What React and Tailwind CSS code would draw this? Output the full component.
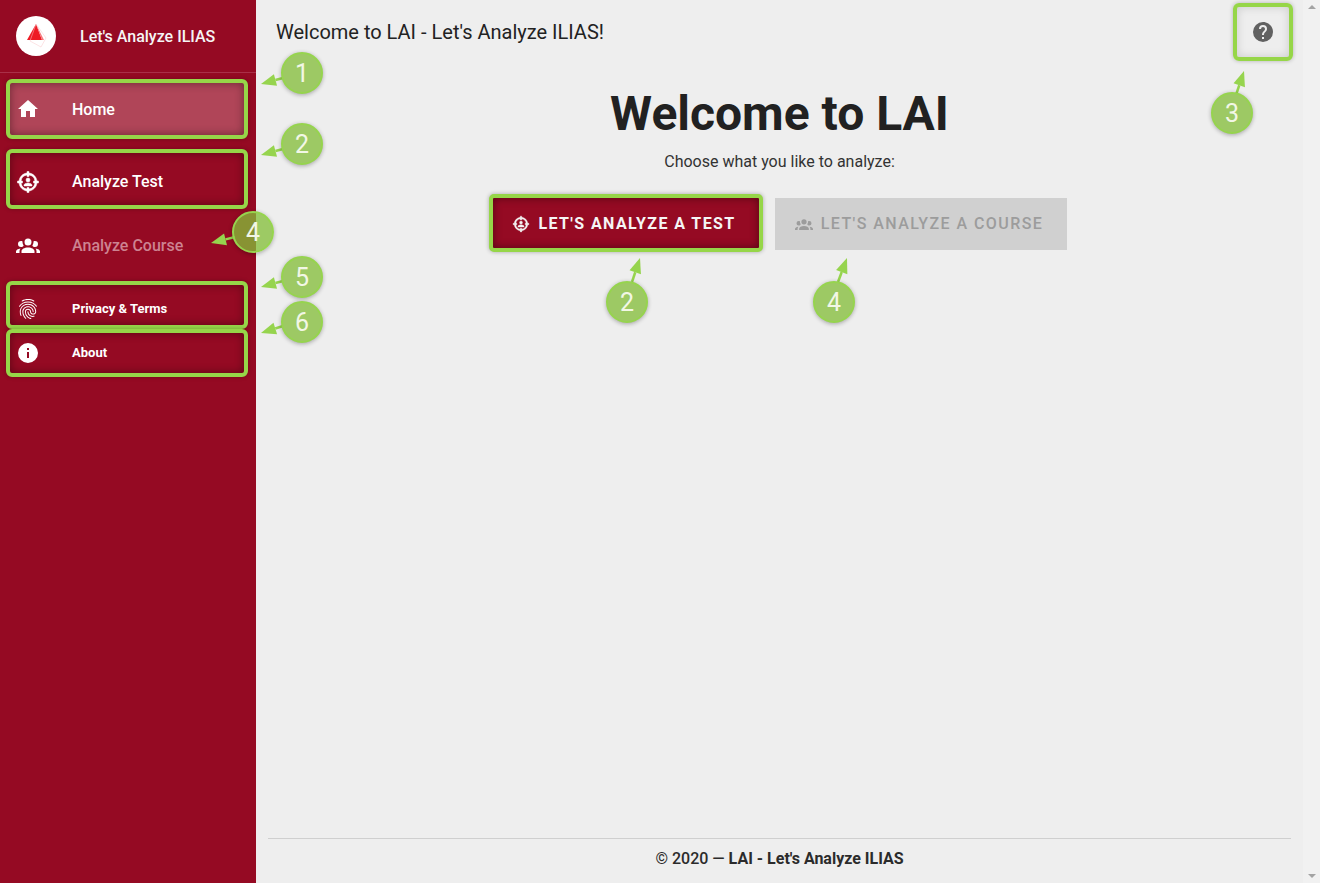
import { MdFingerprint } from "react-icons/md";

const HOME = "M10 20v-6h4v6h5v-8h3L12 3 2 12h3v8z";
const TARGET =
  "M20.95 11h1.55v2h-1.55c-.45 4.17-3.78 7.5-7.95 7.95v1.55h-2v-1.55C6.83 20.5 3.5 17.17 3.05 13H1.5v-2h1.55C3.5 6.83 6.83 3.5 11 3.05V1.5h2v1.55c4.17.45 7.5 3.78 7.95 7.95M5.07 11H6.5v2H5.07A6.98 6.98 0 0 0 11 18.93V17.5h2v1.43A6.98 6.98 0 0 0 18.93 13H17.5v-2h1.43A6.98 6.98 0 0 0 13 5.07V6.5h-2V5.07A6.98 6.98 0 0 0 5.07 11M16 16H8v-1c0-1.33 2.67-2 4-2s4 .67 4 2zm-4-8a2 2 0 0 1 2 2 2 2 0 0 1-2 2 2 2 0 0 1-2-2 2 2 0 0 1 2-2";
const GROUP =
  "M12,5.5A3.5,3.5 0 0,1 15.5,9A3.5,3.5 0 0,1 12,12.5A3.5,3.5 0 0,1 8.5,9A3.5,3.5 0 0,1 12,5.5M5,8C5.56,8 6.08,8.15 6.53,8.42C6.38,9.85 6.8,11.27 7.66,12.38C7.16,13.34 6.16,14 5,14A3,3 0 0,1 2,11A3,3 0 0,1 5,8M19,8A3,3 0 0,1 22,11A3,3 0 0,1 19,14C17.84,14 16.84,13.34 16.34,12.38C17.2,11.27 17.62,9.85 17.47,8.42C17.92,8.15 18.44,8 19,8M5.5,18.25C5.5,16.18 8.41,14.5 12,14.5C15.59,14.5 18.5,16.18 18.5,18.25V20H5.5V18.25M0,20V18.5C0,17.11 1.89,15.94 4.45,15.6C3.86,16.28 3.5,17.22 3.5,18.25V20H0M24,20H20.5V18.25C20.5,17.22 20.14,16.28 19.55,15.6C22.11,15.94 24,17.11 24,18.5V20Z";
const INFO =
  "M13,9H11V7H13M13,17H11V11H13M12,2A10,10 0 0,0 2,12A10,10 0 0,0 12,22A10,10 0 0,0 22,12A10,10 0 0,0 12,2Z";
const HELP =
  "M15.07,11.25L14.17,12.17C13.45,12.89 13,13.5 13,15H11V14.5C11,13.39 11.45,12.39 12.17,11.67L13.41,10.41C13.78,10.05 14,9.55 14,9C14,7.89 13.1,7 12,7A2,2 0 0,0 10,9H8A4,4 0 0,1 12,5A4,4 0 0,1 16,9C16,9.88 15.64,10.67 15.07,11.25M13,19H11V17H13M12,2A10,10 0 0,0 2,12A10,10 0 0,0 12,22A10,10 0 0,0 22,12C22,6.47 17.5,2 12,2Z";

function Icon({ d, className, bold }) {
  return (
    <svg viewBox="0 0 24 24" fill="currentColor" className={className}>
      <path d={d} fillRule="evenodd" stroke={bold ? "currentColor" : "none"} strokeWidth={bold ? 0.5 : 0} />
    </svg>
  );
}

const marked =
  "border-[4px] border-[#96d648] rounded-[6px] shadow-[inset_0_0_10px_rgba(0,0,0,0.4),0_0_4px_rgba(0,0,0,0.25)]";

function NavItem({ icon, label, className, labelClass }) {
  return (
    <div className={`ml-[6px] flex w-[242px] items-center pl-[6px] ${className}`}>
      <span className="flex w-[56px] shrink-0 text-white">{icon}</span>
      <span className={labelClass}>{label}</span>
    </div>
  );
}

function Bubble({ className, n }) {
  return (
    <div
      className={`absolute flex h-[42px] w-[42px] items-center justify-center rounded-full border-2 border-[#96d44e] bg-[#9dc964] text-[25px] leading-none text-[#f2f7e6] shadow-[0_1px_4px_rgba(0,0,0,0.3)] ${className}`}
    >
      {n}
    </div>
  );
}

// arrows of the annotation layer: [tail x, tail y, tip x, tip y]
const arrows = [
  [283, 78, 261, 84],
  [283, 149, 261, 155],
  [235, 237, 211, 243],
  [283, 281, 261, 287],
  [283, 326, 261, 333],
  [1236, 95, 1244, 71],
  [632, 282, 640, 258],
  [838, 282, 847, 258],
];

function Arrow({ a }) {
  const [x1, y1, x2, y2] = a;
  const dx = x2 - x1;
  const dy = y2 - y1;
  const len = Math.hypot(dx, dy);
  const ux = dx / len;
  const uy = dy / len;
  const bx = x2 - ux * 15;
  const by = y2 - uy * 15;
  const pts = `${x2},${y2} ${bx - uy * 6},${by + ux * 6} ${bx + uy * 6},${by - ux * 6}`;
  return (
    <g>
      <line x1={x1} y1={y1} x2={bx} y2={by} stroke="#96d44e" strokeWidth="2.5" />
      <polygon points={pts} fill="#96d44e" />
    </g>
  );
}

export default function App() {
  return (
    <div className="relative flex h-[883px] w-[1320px] overflow-hidden bg-[#eeeeee] font-['Roboto',sans-serif]">
      {/* Sidebar */}
      <aside className="flex w-[256px] shrink-0 flex-col bg-[#950a23]">
        <div className="flex h-[73px] shrink-0 items-center border-b border-[#a93048] pl-[16px]">
          <div className="flex h-[40px] w-[40px] items-center justify-center rounded-full bg-white">
            <svg viewBox="0 0 40 40" className="h-[40px] w-[40px]">
              <polygon points="20,8 11,24 26,24" fill="#ee1c25" />
              <polygon points="20,8 26,24 28,24" fill="#f7777c" />
              <polygon points="20,8 30,22 25,31 14,25" fill="none" stroke="#f8c6c8" strokeWidth="0.5" />
            </svg>
          </div>
          <span className="ml-[24px] pt-[1px] text-[16px] font-medium text-[#f5f5f5]">Let's Analyze ILIAS</span>
        </div>

        <nav className="flex flex-col pt-[6px]">
          <NavItem
            icon={<Icon d={HOME} className="h-6 w-6" />}
            label="Home"
            className={`h-[60px] bg-[#b04558] ${marked}`}
            labelClass="pt-[1px] text-[16px] font-medium text-white"
          />
          <NavItem
            icon={<Icon d={TARGET} bold className="h-6 w-6" />}
            label="Analyze Test"
            className={`mt-[10px] h-[60px] pt-[5px] ${marked}`}
            labelClass="text-[16px] font-medium text-white"
          />
          <NavItem
            icon={<Icon d={GROUP} className="h-6 w-6" />}
            label="Analyze Course"
            className="mt-[6px] h-[60px] border-[4px] border-transparent"
            labelClass="pt-[1px] text-[16px] font-medium text-[#cd8391]"
          />
          <NavItem
            icon={<MdFingerprint className="h-6 w-6" />}
            label="Privacy & Terms"
            className={`mt-[6px] h-[48px] pt-[7px] ${marked}`}
            labelClass="text-[13px] font-bold text-white"
          />
          <NavItem
            icon={<Icon d={INFO} className="h-6 w-6" />}
            label="About"
            className={`h-[48px] ${marked}`}
            labelClass="text-[13px] font-bold text-white"
          />
        </nav>
      </aside>

      {/* Main */}
      <main className="flex min-w-0 flex-1 flex-col">
        <header className="flex h-[64px] shrink-0 items-center justify-between pl-[20px] pr-[10px]">
          <h2 className="text-[20px] leading-none text-[#222222]">Welcome to LAI - Let's Analyze ILIAS!</h2>
          <div className="flex h-[58px] w-[60px] items-center justify-center rounded-[6px] border-[4px] border-[#96d648] shadow-[inset_0_0_10px_rgba(0,0,0,0.15),0_0_4px_rgba(0,0,0,0.25)]">
            <Icon d={HELP} className="h-6 w-6 text-[#616161]" />
          </div>
        </header>

        <div className="flex flex-1 flex-col items-center">
          <h1 className="mt-[21px] text-[48px] font-bold leading-[58px] text-[#212121]">Welcome to LAI</h1>
          <p className="mt-[7px] text-[16px] leading-6 text-[#333333]">Choose what you like to analyze:</p>
          <div className="mr-[3px] mt-[20px] flex items-start gap-[12px]">
            <button className="flex h-[58px] w-[274px] items-center justify-center gap-[8px] rounded-[5px] border-[4px] border-[#96d648] bg-[#950a23] pr-[4px] pt-[2px] text-[16px] font-bold uppercase tracking-[1.4px] text-[#f5f5f5] shadow-[inset_0_0_8px_rgba(0,0,0,0.45),0_0_4px_rgba(0,0,0,0.3)]">
              <Icon d={TARGET} bold className="h-[18px] w-[18px]" />
              Let's Analyze a Test
            </button>
            <button className="mt-[4px] flex h-[52px] w-[292px] items-center justify-center gap-[8px] bg-[#d0d0d0] pr-[4px] text-[16px] font-medium uppercase tracking-[1.43px] text-[#9c9c9c]">
              <Icon d={GROUP} className="h-[18px] w-[18px]" />
              Let's Analyze a Course
            </button>
          </div>
        </div>

        <footer className="mx-[12px] flex h-[45px] shrink-0 items-center justify-center border-t border-[#cfcfcf] pb-[4px] text-[16px] font-medium text-[#2b2b2b]">
          <span>
            © 2020 — <strong className="font-bold">LAI - Let's Analyze ILIAS</strong>
          </span>
        </footer>
      </main>

      {/* Scrollbar */}
      <div className="flex w-[17px] shrink-0 flex-col items-center justify-between bg-[#f1f1f1] py-[5px]">
        <span className="h-0 w-0 border-x-[4px] border-b-[4px] border-x-transparent border-b-[#a3a3a3]" />
        <span className="h-0 w-0 border-x-[4px] border-t-[4px] border-x-transparent border-t-[#a3a3a3]" />
      </div>

      {/* Annotation layer */}
      <svg className="pointer-events-none absolute left-0 top-0 h-[883px] w-[1320px]" viewBox="0 0 1320 883">
        {arrows.map((a) => (
          <Arrow key={a.join()} a={a} />
        ))}
      </svg>
      <Bubble n="1" className="left-[281px] top-[52px]" />
      <Bubble n="2" className="left-[281px] top-[123px]" />
      <Bubble n="3" className="left-[1211px] top-[92px]" />
      <Bubble n="4" className="left-[232px] top-[211px] bg-[rgba(131,190,56,0.76)]" />
      <Bubble n="5" className="left-[281px] top-[256px]" />
      <Bubble n="6" className="left-[281px] top-[301px]" />
      <Bubble n="2" className="left-[606px] top-[281px]" />
      <Bubble n="4" className="left-[813px] top-[281px]" />
    </div>
  );
}
